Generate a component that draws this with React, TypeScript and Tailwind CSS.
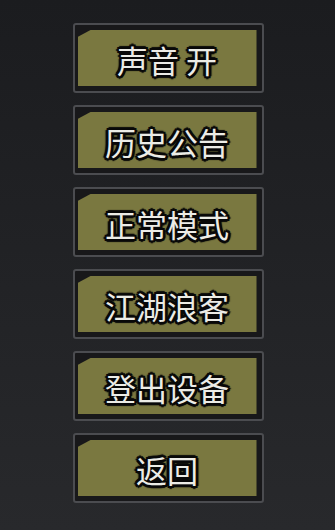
const items = ["声音 开", "历史公告", "正常模式", "江湖浪客", "登出设备", "返回"];

function MenuButton({ label }: { label: string }) {
  return (
    <button className="w-[191px] h-[70px] shrink-0 rounded-[3px] border-2 border-[#4b4c50] bg-[#18181a] pl-[3px] pt-[5px] pr-[5px] pb-[5px]">
      <div className="w-full h-full bg-[#7a7840] [clip-path:polygon(13px_0,100%_0,100%_100%,0_100%,0_7px)] flex items-center justify-center pt-[3px]">
        <span className="text-[31px] leading-none font-normal text-[#ecece6] whitespace-pre [font-family:'Noto_Sans_CJK_SC',sans-serif] [text-shadow:2px_0_0_#080808,-2px_0_0_#080808,0_2px_0_#080808,0_-2px_0_#080808,2px_2px_0_#080808,-2px_2px_0_#080808,2px_-2px_0_#080808,-2px_-2px_0_#080808,3px_0_1px_#080808,-3px_0_1px_#080808,0_3px_1px_#080808,0_-3px_1px_#080808]">
          {label}
        </span>
      </div>
    </button>
  );
}

export default function App() {
  return (
    <div className="w-[335px] h-[530px] overflow-hidden bg-gradient-to-b from-[#1b1c1f] to-[#28292c] flex flex-col items-center pt-[23px] gap-[12px] pl-[1px]">
      {items.map((t) => (
        <MenuButton key={t} label={t} />
      ))}
    </div>
  );
}
